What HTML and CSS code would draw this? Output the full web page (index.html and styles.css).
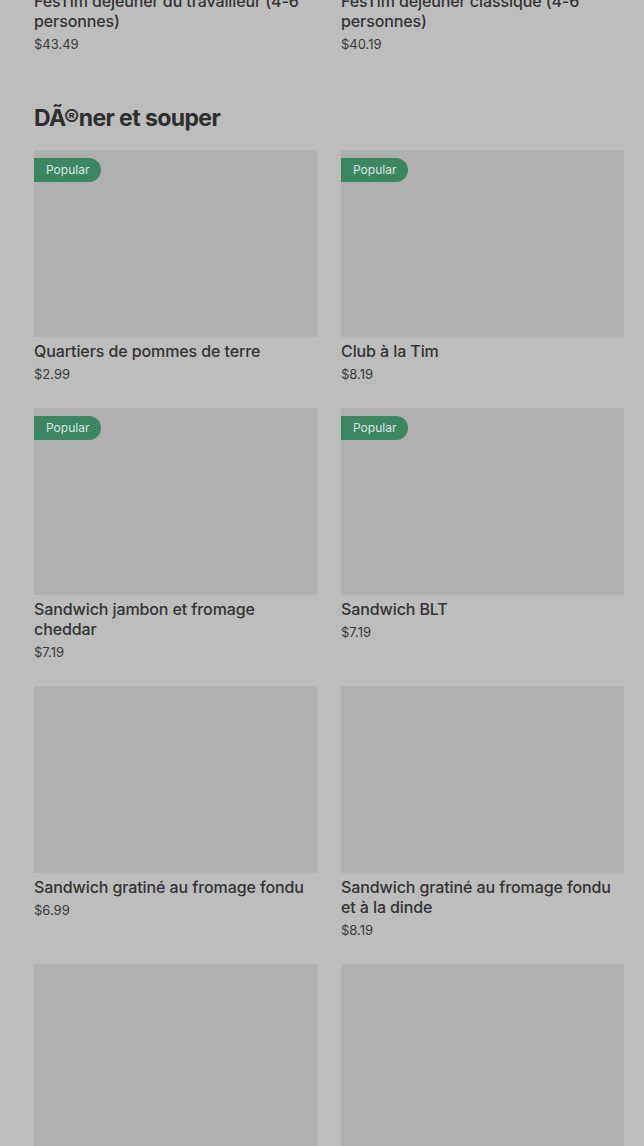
FILE: index.html
```html
<!DOCTYPE html>
<html lang="fr">
<head>
<meta charset="utf-8">
<link rel="stylesheet" href="styles.css">
</head>
<body>
<div class="page">
  <section class="section prev">
    <div class="grid">
      <div class="card">
        <div class="title">FesTim déjeuner du travailleur (4-6 personnes)</div>
        <div class="price">$43.49</div>
      </div>
      <div class="card">
        <div class="title">FesTim déjeuner classique (4-6 personnes)</div>
        <div class="price">$40.19</div>
      </div>
    </div>
  </section>
  <section class="section">
    <h2 class="heading">DÃ®ner et souper</h2>
    <div class="grid">
      <div class="card">
        <div class="thumb"><span class="badge">Popular</span></div>
        <div class="title">Quartiers de pommes de terre</div>
        <div class="price">$2.99</div>
      </div>
      <div class="card">
        <div class="thumb"><span class="badge">Popular</span></div>
        <div class="title">Club à la Tim</div>
        <div class="price">$8.19</div>
      </div>
      <div class="card">
        <div class="thumb"><span class="badge">Popular</span></div>
        <div class="title">Sandwich jambon et fromage cheddar</div>
        <div class="price">$7.19</div>
      </div>
      <div class="card">
        <div class="thumb"><span class="badge">Popular</span></div>
        <div class="title">Sandwich BLT</div>
        <div class="price">$7.19</div>
      </div>
      <div class="card">
        <div class="thumb"></div>
        <div class="title">Sandwich gratiné au fromage fondu</div>
        <div class="price">$6.99</div>
      </div>
      <div class="card">
        <div class="thumb"></div>
        <div class="title">Sandwich gratiné au fromage fondu et à la dinde</div>
        <div class="price">$8.19</div>
      </div>
      <div class="card">
        <div class="thumb"></div>
      </div>
      <div class="card">
        <div class="thumb"></div>
      </div>
    </div>
  </section>
</div>
</body>
</html>
```

FILE: styles.css
```css
html, body {
  margin: 0;
  padding: 0;
  background: #bdbdbd;
  overflow: hidden;
}
body {
  font-family: Inter, "Noto Sans", sans-serif;
  color: #333333;
}
.page {
  padding: 0 20px 0 34px;
  margin-top: -9px;
}
.grid {
  display: grid;
  grid-template-columns: 283px 283px;
  column-gap: 24px;
  row-gap: 24px;
}
.card {
  display: flex;
  flex-direction: column;
}
.thumb {
  position: relative;
  height: 187px;
  background: #b0b0b0;
  margin-bottom: 4px;
}
.badge {
  position: absolute;
  left: 0;
  top: 8px;
  height: 24px;
  line-height: 24px;
  padding: 0 12px;
  background: #3b8761;
  color: #dfe6e2;
  font-size: 12px;
  border-radius: 0 12px 12px 0;
}
.title {
  font-size: 16px;
  font-weight: 500;
  line-height: 20px;
  letter-spacing: -0.1px;
  color: #333333;
}
.price {
  font-size: 13px;
  line-height: 20px;
  margin-top: 3px;
  color: #3a3a3a;
}
.heading {
  margin: 48px 0 16px;
  font-size: 23px;
  line-height: 32px;
  font-weight: 700;
  letter-spacing: -0.6px;
  color: #2e2e2e;
}
```
